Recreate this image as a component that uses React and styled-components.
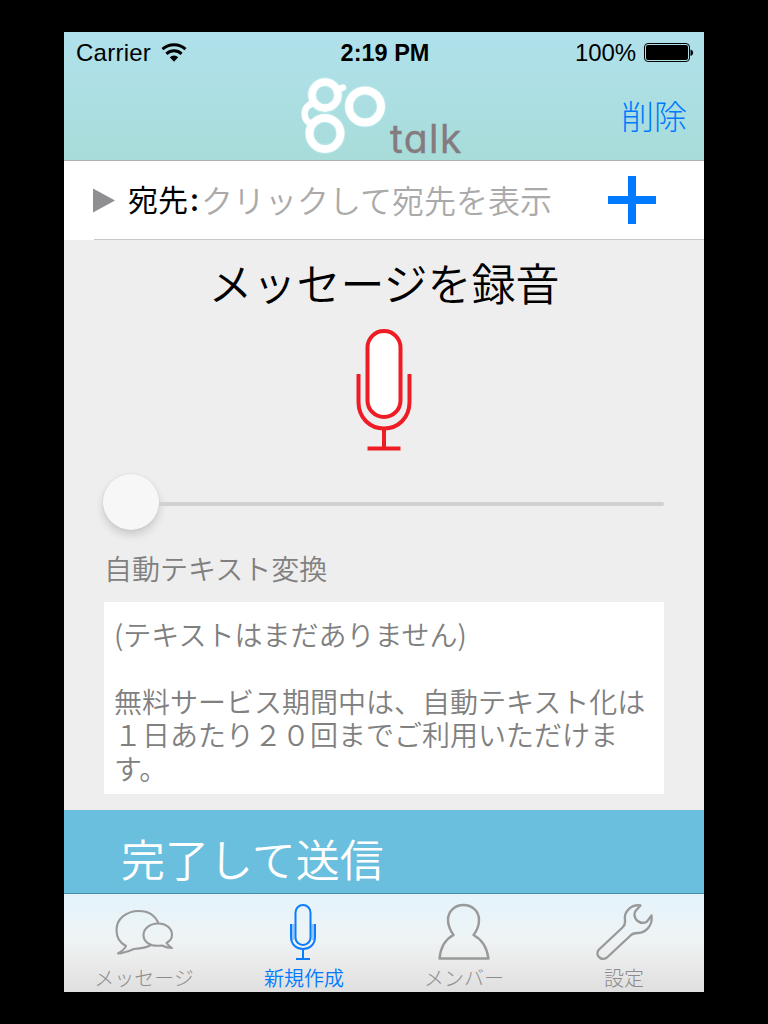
import React from "react";
import styled, { createGlobalStyle } from "styled-components";

const jp = '"Noto Sans CJK JP", sans-serif';
const latin = '"Liberation Sans", Arial, sans-serif';

const GlobalStyle = createGlobalStyle`
  * { box-sizing: border-box; }
  body { margin: 0; background: #000; font-family: ${jp}; }
  button { border: 0; padding: 0; background: none; font: inherit; color: inherit; }
`;

const Stage = styled.div`
  height: 1024px;
  padding: 32px 64px;
  background: #000;
`;

const Phone = styled.div`
  width: 640px;
  height: 960px;
  display: flex;
  flex-direction: column;
  overflow: hidden;
  background: #eee;
`;

const Header = styled.header`
  height: 129px;
  flex: none;
  background: linear-gradient(#b0e1ec, #a8dcd9);
  border-bottom: 1px solid #b1afb0;
`;

const StatusBar = styled.div`
  height: 40px;
  display: grid;
  grid-template-columns: 1fr auto 1fr;
  align-items: center;
  padding: 2px 10px 0 12px;
  font: 24px/38px ${latin};
  color: #000;
`;

const StatusLeft = styled.div`
  display: flex;
  align-items: center;
  gap: 10px;
  letter-spacing: 0.25px;
`;

const Clock = styled.div`
  font-weight: 700;
  font-size: 23.5px;
`;

const StatusRight = styled.div`
  display: flex;
  align-items: center;
  justify-content: flex-end;
  gap: 8px;
  letter-spacing: -0.1px;
`;

const NavBar = styled.nav`
  height: 88px;
  display: grid;
  grid-template-columns: 1fr 168px 1fr;
  align-items: start;
`;

const Logo = styled.div`
  display: flex;
  height: 88px;
  svg { flex: none; margin-top: 3px; }
`;

const LogoWord = styled.span`
  margin: 41px 0 0 2px;
  font: 400 39px/52px Inter, sans-serif;
  font-feature-settings: "cv11";
  letter-spacing: 1.4px;
  color: #857b7f;
  -webkit-text-stroke: 0.4px #857b7f;
`;

const DeleteButton = styled.button`
  justify-self: end;
  margin: 19px 17px 0 0;
  font-size: 33px;
  line-height: 48px;
  font-weight: 300;
  color: #007aff;
`;

const Recipient = styled.div`
  height: 79px;
  flex: none;
  display: flex;
  background: #fff;
  padding-left: 29px;
`;

const RecipientInner = styled.div`
  flex: 1;
  display: flex;
  align-items: center;
  border-bottom: 1px solid #c8c7cc;
  margin-left: 1px;
  svg { flex: none; }
`;

const RecipientLabel = styled.span`
  width: 73px;
  margin: -4px 0 0 13px;
  font-size: 30px;
  line-height: 44px;
  white-space: nowrap;
`;

const Colon = styled.span`
  margin-left: 2px;
  font-weight: 500;
`;

const Placeholder = styled.span`
  flex: 1;
  margin-top: -3px;
  font-size: 32px;
  line-height: 46px;
  font-weight: 350;
  color: #aaa;
  white-space: nowrap;
`;

const AddButton = styled.button`
  display: flex;
  margin-right: 48px;
`;

const Content = styled.main`
  height: 570px;
  flex: none;
  display: flex;
  flex-direction: column;
  padding: 0 40px;
`;

const Title = styled.h1`
  margin: 10px 0 0;
  height: 67px;
  text-align: center;
  font-size: 44px;
  line-height: 64px;
  font-weight: 350;
`;

const RecordButton = styled.button`
  display: flex;
  align-self: center;
  margin-top: 11px;
`;

const Slider = styled.div`
  height: 60px;
  margin-top: 20px;
  display: flex;
  align-items: center;
`;

const Thumb = styled.div`
  width: 56px;
  height: 56px;
  flex: none;
  margin: 0 0 0 -1px;
  border-radius: 50%;
  background: #f7f7f7;
  box-shadow: 0 5px 8px rgba(0, 0, 0, 0.15), 0 0 2px rgba(0, 0, 0, 0.1);
`;

const Track = styled.div`
  flex: 1;
  height: 4px;
  margin-top: 4px;
  border-radius: 0 2px 2px 0;
  background: #d1d1d1;
`;

const Caption = styled.div`
  margin-top: 16px;
  height: 40px;
  font-size: 28px;
  line-height: 40px;
  font-weight: 350;
  color: #808080;
`;

const Transcript = styled.div`
  margin-top: 14px;
  height: 192px;
  padding: 16px 10px 0;
  background: #fff;
  color: #808080;
  font-size: 28px;
  line-height: 33.4px;
  font-weight: 350;
  white-space: pre;
`;

const SendBar = styled.button`
  height: 84px;
  flex: none;
  display: block;
  padding: 11px 0 0 57px;
  text-align: left;
  background: #6abede;
  border-bottom: 1px solid #4090a8;
  color: #fff;
  font-size: 44px;
  line-height: 74px;
  font-weight: 350;
`;

const TabBar = styled.nav`
  height: 98px;
  flex: none;
  display: grid;
  grid-template-columns: repeat(4, 160px);
  background: linear-gradient(#e4f3fb, #eef4f5 45%, #ebebeb 68%, #dedfde);
`;

const Tab = styled.button`
  display: flex;
  flex-direction: column;
  align-items: center;
  padding-top: 8px;
  color: ${(p) => (p.$active ? "#007aff" : "#8c8c8c")};
  font-size: 20px;
  line-height: 32px;
  font-weight: ${(p) => (p.$active ? 350 : 300)};
  svg { flex: none; }
`;

const WifiIcon = () => (
  <svg width="26" height="20" viewBox="0 0 26 20" fill="none" stroke="#000">
    <path d="M1.5 6.2 A16.8 16.8 0 0 1 24.5 6.2" strokeWidth="3" />
    <path d="M5.4 10.8 A11 11 0 0 1 20.6 10.8" strokeWidth="3" />
    <path d="M8.8 14.3 A6.1 6.1 0 0 1 17.2 14.3 L13 18.8Z" fill="#000" stroke="none" />
  </svg>
);

const BatteryIcon = () => (
  <svg width="50" height="20" viewBox="0 0 50 20">
    <rect x="0.5" y="0.5" width="45" height="18" rx="3.5" fill="none" stroke="#000" />
    <rect x="2" y="2" width="42" height="15" rx="2" />
    <path d="M46.5 6.5 C50 7 50 12.5 46.5 13Z" />
  </svg>
);

const GoMark = () => (
  <svg width="88" height="80" viewBox="0 0 88 80" fill="none" stroke="#fff">
    <g stroke="#c0f0ee" strokeOpacity="0.5" strokeWidth="10">
      <circle cx="25" cy="20" r="13" />
      <circle cx="65" cy="31.5" r="16" />
      <circle cx="25" cy="58.5" r="15.5" />
    </g>
    <circle cx="25" cy="20" r="13" strokeWidth="7.5" />
    <path d="M37 15 L43 12.5" strokeWidth="6.5" strokeLinecap="round" />
    <circle cx="65" cy="31.5" r="16" strokeWidth="8" />
    <circle cx="25" cy="58.5" r="15.5" strokeWidth="8" />
    <path d="M14 28 C2 31 2 44 11 49" strokeWidth="6.5" />
    <path d="M14 29 L25 36 L34 31" strokeWidth="2" />
  </svg>
);

const TriangleIcon = () => (
  <svg width="21" height="25" viewBox="1 0 21 25" fill="#8e8e93" overflow="visible">
    <path d="M0 0.5 L22 12.5 L0 24.5Z" />
  </svg>
);

const PlusIcon = () => (
  <svg width="48" height="48" viewBox="0 0 48 48" fill="#007aff">
    <path d="M20 0h8v20h20v8H28v20h-8V28H0v-8h20Z" />
  </svg>
);

const RecordMic = () => (
  <svg width="56" height="124" viewBox="0 0 56 124" fill="none" stroke="#ee1c25" strokeWidth="4">
    <rect x="11.5" y="3" width="33" height="86" rx="16.5" fill="#fff" />
    <path d="M2.5 46 V74 C2.5 90 14 100.5 28 100.5 S53.5 90 53.5 74 V46" />
    <path d="M28 100 V120 M11.5 120.5 H44.5" />
  </svg>
);

const ChatIcon = () => (
  <svg width="60" height="60" viewBox="0 0 60 60" fill="none" stroke="#999" strokeWidth="2.1" strokeLinejoin="round">
    <path d="M44.5 21.5 C41 13 34 9 25 9 C12 9 2.5 17 2.5 28 C2.5 35 6 41 12 44 C11 47 8 49 4 51.5 C11 51 15 49 20 47 C27 46.5 32 46 37 43" />
    <path d="M44 21.5 C36 21.5 29.5 26.5 29.5 33 C29.5 40 36 44 44 43.8 L48 43.5 C51 45 54 46 58 46 C55 44 53.5 42.5 52.5 41 C56 39 58 36 58 33 C58 26 52 21.5 44 21.5Z" />
  </svg>
);

const MicIcon = () => (
  <svg width="60" height="60" viewBox="0 0 60 60" fill="none" stroke="#0a7cff" strokeWidth="2">
    <rect x="21.5" y="3" width="15" height="40" rx="7.5" />
    <path d="M17 22 V35 C17 43 23 47 29 47 S41 43 41 35 V22 M29 47 V57 M22 57 H36" />
    <path d="M19 22 V38 M39 22 V38" strokeOpacity="0.4" strokeWidth="3" />
  </svg>
);

const MemberIcon = () => (
  <svg width="60" height="60" viewBox="0 0 60 60" fill="none" stroke="#999" strokeWidth="2.4" strokeLinejoin="round">
    <path d="M19.5 33 C16 28 14 24 14 18 C14 9 21 3 29.5 3 S45 9 45 18 C45 24 43.5 28 39.5 33 C49 38 53 46 54.5 56.5 H5.5 C6.5 46 10 38 19.5 33Z" />
  </svg>
);

const WrenchIcon = () => (
  <svg width="60" height="60" viewBox="0 0 60 60" fill="none" stroke="#999" strokeWidth="2.3" strokeLinejoin="round">
    <path d="M46.5 3.5 C38 2 29.5 9 31 18.5 C31.5 22 30.5 23.5 28.5 25.5 L5 47.5 C0.5 53 7 59.5 13 55.5 L36 34 C38 31.5 40 31 44 31 C52 31 59 23 57.5 13.5 L53 19.5 C50 21.5 46 21 43 18.5 C40 15 40 11.5 41.5 9Z" />
  </svg>
);

const TABS = [
  { label: "メッセージ", icon: <ChatIcon /> },
  { label: "新規作成", icon: <MicIcon />, active: true },
  { label: "メンバー", icon: <MemberIcon /> },
  { label: "設定", icon: <WrenchIcon /> },
];

const MESSAGE = `(テキストはまだありません)

無料サービス期間中は、自動テキスト化は
１日あたり２０回までご利用いただけま
す。`;

export default function App() {
  return (
    <Stage>
      <GlobalStyle />
      <Phone>
        <Header>
          <StatusBar>
            <StatusLeft>Carrier<WifiIcon /></StatusLeft>
            <Clock>2:19 PM</Clock>
            <StatusRight>100%<BatteryIcon /></StatusRight>
          </StatusBar>
          <NavBar>
            <span />
            <Logo>
              <GoMark />
              <LogoWord>talk</LogoWord>
            </Logo>
            <DeleteButton>削除</DeleteButton>
          </NavBar>
        </Header>
        <Recipient>
          <RecipientInner>
            <TriangleIcon />
            <RecipientLabel>宛先<Colon>:</Colon></RecipientLabel>
            <Placeholder>クリックして宛先を表示</Placeholder>
            <AddButton aria-label="追加"><PlusIcon /></AddButton>
          </RecipientInner>
        </Recipient>
        <Content>
          <Title>メッセージを録音</Title>
          <RecordButton aria-label="録音"><RecordMic /></RecordButton>
          <Slider>
            <Thumb />
            <Track />
          </Slider>
          <Caption>自動テキスト変換</Caption>
          <Transcript>{MESSAGE}</Transcript>
        </Content>
        <SendBar>完了して送信</SendBar>
        <TabBar>
          {TABS.map((t) => (
            <Tab key={t.label} $active={t.active}>
              {t.icon}
              {t.label}
            </Tab>
          ))}
        </TabBar>
      </Phone>
    </Stage>
  );
}
